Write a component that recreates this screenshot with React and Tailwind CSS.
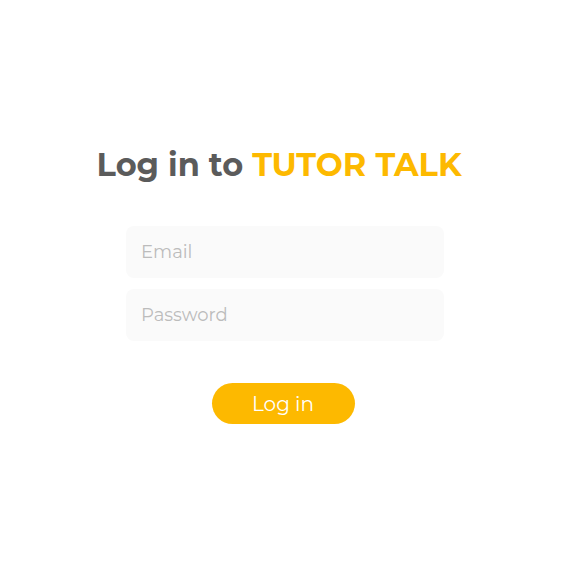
import React from 'react'

export default function App() {
  return (
    <div className="w-full h-[570px] bg-white flex flex-col items-center pt-[147px] font-['Montserrat','Open_Sans',sans-serif]">
      <h1 className="text-[32px] leading-[36px] font-bold text-[#5b5b5b] -ml-[12px]">
        Log in to <span className="text-[#fdb900]">TUTOR TALK</span>
      </h1>
      <form className="mt-[43px] flex flex-col items-center" onSubmit={(e) => e.preventDefault()}>
        <div className="flex flex-col gap-[11px]">
          <input
            type="email"
            placeholder="Email"
            className="w-[318px] h-[52px] rounded-lg bg-[#fafafa] px-[15px] text-[18px] text-[#555] placeholder:text-[#bcbcbc] outline-none"
          />
          <input
            type="password"
            placeholder="Password"
            className="w-[318px] h-[52px] rounded-lg bg-[#fafafa] px-[15px] text-[18px] text-[#555] placeholder:text-[#bcbcbc] outline-none"
          />
        </div>
        <button
          type="submit"
          className="mt-[42px] -ml-[4px] w-[143px] h-[41px] rounded-full bg-[#fdb900] text-white text-[20px] leading-none"
        >
          Log in
        </button>
      </form>
    </div>
  )
}
